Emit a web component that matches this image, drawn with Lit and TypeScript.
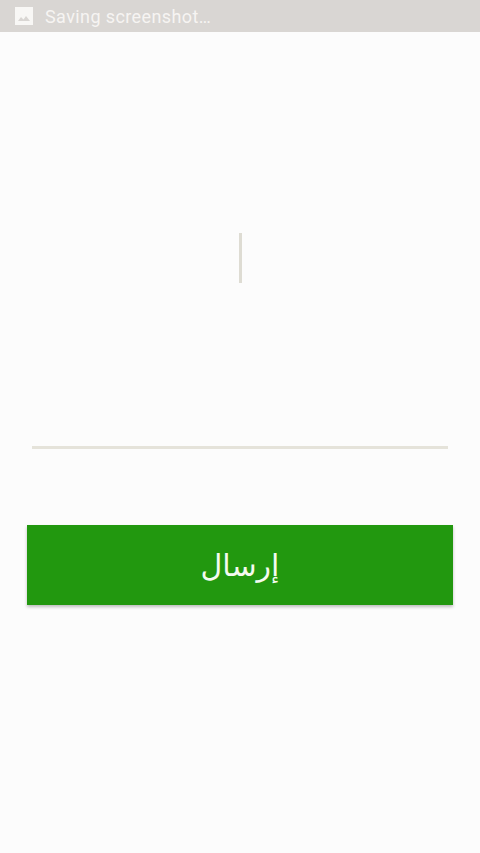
import { LitElement, html, css } from "lit";
import { customElement } from "lit/decorators.js";

@customElement("app-root")
export class AppRoot extends LitElement {
  static styles = css`
    :host {
      display: block;
      height: 853px;
      background: #fcfcfc;
      font-family: Roboto, "Noto Sans", sans-serif;
      overflow: hidden;
    }
    .status {
      height: 32px;
      background: #d9d6d3;
      display: flex;
      align-items: center;
      gap: 12px;
      padding-left: 15px;
      color: #f6f4f2;
      font-size: 18px;
      letter-spacing: 0.4px;
    }
    .status svg {
      width: 18px;
      height: 18px;
      display: block;
    }
    .field {
      margin: 0 32px;
      height: 417px;
      box-sizing: border-box;
      border-bottom: 3px solid #e5e3da;
      padding-top: 201px;
      display: flex;
      justify-content: center;
      align-items: flex-start;
    }
    .caret {
      width: 3px;
      height: 50px;
      background: #dedcd3;
    }
    .send {
      display: flex;
      align-items: center;
      justify-content: center;
      width: 426px;
      height: 80px;
      margin: 76px 0 0 27px;
      padding: 0;
      border: 0;
      background: #22980f;
      color: #f4fbf0;
      font-family: "DejaVu Sans", sans-serif;
      font-size: 30px;
      box-shadow: 0 2px 3px rgba(0, 0, 0, 0.25);
    }
  `;

  render() {
    return html`
      <div class="status">
        <svg viewBox="0 0 18 18" aria-hidden="true">
          <path fill="#f8f7f5" d="M0 0h18v18H0z" />
          <path fill="#d9d6d3" d="M3 14l3-4 2.5 2.5L11 9l4 5z" />
        </svg>
        <span>Saving screenshot…</span>
      </div>
      <div class="field"><div class="caret"></div></div>
      <button class="send" dir="rtl">إرسال</button>
    `;
  }
}
